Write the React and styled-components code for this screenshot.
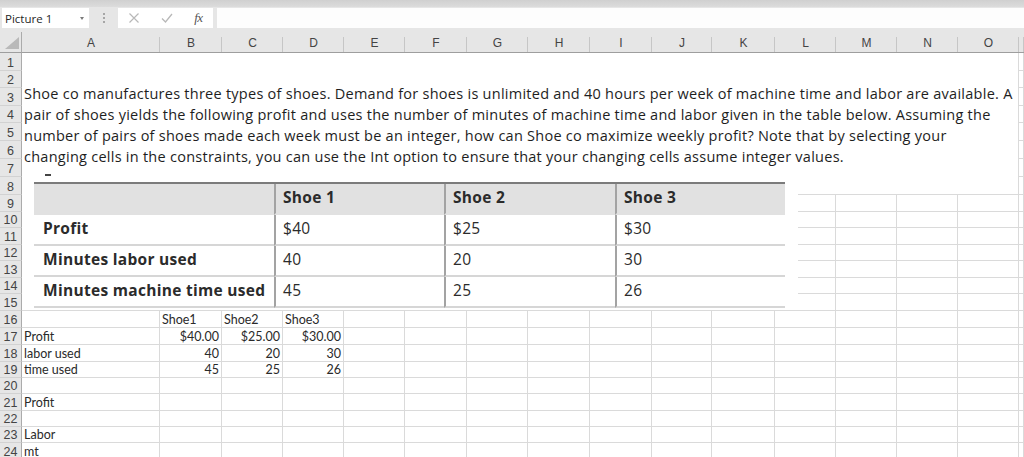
import React from 'react';
import styled, { createGlobalStyle } from 'styled-components';

const GlobalStyle = createGlobalStyle`
  html, body { margin: 0; padding: 0; background: #ffffff; }
  body { width: 1024px; height: 457px; overflow: hidden; }
  #root { width: 1024px; height: 457px; }
`;

const COLS = ['A', 'B', 'C', 'D', 'E', 'F', 'G', 'H', 'I', 'J', 'K', 'L', 'M', 'N', 'O'];
const COL_W = [138, 62, 61, 61, 61, 62, 61, 62, 62, 60, 63, 61, 61, 61, 61];
const ROW_H = [18, 17, 18, 17, 18, 18, 18, 18, 17, 16, 17, 16, 17, 16, 17, 17, 17, 17, 16, 16, 17, 16, 16, 17];

const CELLS = {
  16: [['', 'left'], ['Shoe1', 'left'], ['Shoe2', 'left'], ['Shoe3', 'left']],
  17: [['Profit', 'left'], ['$40.00', 'right'], ['$25.00', 'right'], ['$30.00', 'right']],
  18: [['labor used', 'left'], ['40', 'right'], ['20', 'right'], ['30', 'right']],
  19: [['time used', 'left'], ['45', 'right'], ['25', 'right'], ['26', 'right']],
  21: [['Profit', 'left']],
  23: [['Labor', 'left']],
  24: [['mt', 'left']],
};

const PARAGRAPH = [
  'Shoe co manufactures three types of shoes. Demand for shoes is unlimited and 40 hours per week of machine time and labor are available. A',
  'pair of shoes yields the following profit and uses the number of minutes of machine time and labor given in the table below. Assuming the',
  'number of pairs of shoes made each week must be an integer, how can Shoe co maximize weekly profit? Note that by selecting your',
  'changing cells in the constraints, you can use the Int option to ensure that your changing cells assume integer values.',
];

const TABLE = [
  ['', 'Shoe 1', 'Shoe 2', 'Shoe 3'],
  ['Profit', '$40', '$25', '$30'],
  ['Minutes labor used', '40', '20', '30'],
  ['Minutes machine time used', '45', '25', '26'],
];

const Window = styled.div`
  width: 1024px;
  height: 457px;
  overflow: hidden;
  display: flex;
  flex-direction: column;
  background: #e6e6e6;
  font-family: "Liberation Sans", Arial, sans-serif;
`;

const TopBand = styled.div`
  height: 7px;
  flex: none;
  background: linear-gradient(#d0d0d0, #dcdcdc);
`;

const FormulaBar = styled.div`
  height: 20px;
  flex: none;
  margin-top: 1px;
  display: flex;
  align-items: stretch;
`;

const NameBox = styled.div`
  width: 87px;
  margin-left: 2px;
  background: #fff;
  display: flex;
  align-items: center;
  justify-content: space-between;
  padding: 0 5px 0 3px;
  box-sizing: border-box;
  font-family: "Open Sans", sans-serif;
  font-size: 11.5px;
  color: #262626;
`;

const Caret = styled.span`
  width: 0;
  height: 0;
  border-left: 2.5px solid transparent;
  border-right: 2.5px solid transparent;
  border-top: 3px solid #7a7a7a;
  margin-top: 1px;
`;

const Dots = styled.div`
  width: 29px;
  display: flex;
  flex-direction: column;
  align-items: center;
  justify-content: center;
  gap: 2px;
  span {
    width: 2px;
    height: 2px;
    background: #a6a6a6;
  }
`;

const FuncBox = styled.div`
  width: 95px;
  background: #fff;
  display: flex;
  align-items: center;
  justify-content: space-around;
  color: #b5b5b5;
`;

const Fx = styled.span`
  font-family: "Liberation Serif", serif;
  font-style: italic;
  font-size: 13px;
  color: #555;
  letter-spacing: -0.5px;
`;

const FormulaInput = styled.div`
  flex: 1;
  margin-left: 4px;
  background: #fdfdfd;
`;

const Gap = styled.div`
  height: 4px;
  flex: none;
`;

const SheetArea = styled.div`
  position: relative;
  flex: 1;
  background: #fff;
  overflow: hidden;
`;

const Grid = styled.div`
  display: grid;
  grid-template-columns: ${p => p.$cols};
  grid-template-rows: ${p => p.$rows};
`;

const Corner = styled.div`
  background: #e6e6e6;
  border-right: 1px solid #ababab;
  border-bottom: 1px solid #9e9e9e;
  position: relative;
  &::after {
    content: '';
    position: absolute;
    right: 2px;
    bottom: 3px;
    width: 0;
    height: 0;
    border-left: 14px solid transparent;
    border-bottom: 12px solid #b9b9b9;
  }
`;

const ColHead = styled.div`
  background: #e6e6e6;
  border-bottom: 1px solid #9e9e9e;
  position: relative;
  display: flex;
  align-items: flex-end;
  justify-content: center;
  padding-bottom: 2px;
  font-size: 12px;
  color: #444;
  &::after {
    content: '';
    position: absolute;
    right: 0;
    top: 5px;
    bottom: 0;
    width: 1px;
    background: #c6c6c6;
  }
`;

const RowHead = styled.div`
  background: #e6e6e6;
  border-right: 1px solid #ababab;
  border-bottom: 1px solid #d2d2d2;
  display: flex;
  align-items: flex-end;
  justify-content: center;
  font-size: 12.5px;
  color: #444;
  line-height: 14px;
`;

const Cell = styled.div`
  border-right: 1px solid #dadada;
  border-bottom: 1px solid #dadada;
  display: flex;
  align-items: flex-end;
  justify-content: ${p => (p.$align === 'right' ? 'flex-end' : 'flex-start')};
  padding: 0 2px;
  font-family: "Lato", sans-serif;
  font-size: 12.5px;
  line-height: 14px;
  color: #2a2a2a;
  white-space: nowrap;
  overflow: visible;
`;

const TextBox = styled.div`
  position: absolute;
  left: 22px;
  top: 21px;
  width: 996px;
  height: 141px;
  background: #fff;
  padding: 30px 0 0 2px;
  box-sizing: border-box;
`;

const Line = styled.div`
  font-family: "Open Sans", sans-serif;
  font-size: 14.5px;
  letter-spacing: 0.26px;
  line-height: 21px;
  color: #1e1e1e;
  white-space: nowrap;
`;

const Dash = styled.div`
  width: 6px;
  height: 1.5px;
  background: #444;
  margin: 7px 0 0 21px;
`;

const Picture = styled.div`
  position: absolute;
  left: 22px;
  top: 144px;
  width: 776px;
  height: 134px;
  background: #fff;
  padding: 6px 0 0 12px;
  box-sizing: border-box;
`;

const Table = styled.div`
  width: 751px;
  display: grid;
  grid-template-columns: 240px 170px 171px 170px;
  grid-auto-rows: 31px;
  border-top: 2px solid #7b7b7b;
  font-family: "Open Sans", sans-serif;
  font-size: 15.5px;
  letter-spacing: 0.3px;
  color: #2b2b2b;
`;

const TCell = styled.div`
  background: ${p => (p.$head ? '#e1e1e1' : '#fff')};
  border-left: ${p => (p.$first ? 'none' : '2px solid #a3a3a3')};
  border-bottom: 2px solid ${p => (p.$head ? '#e1e1e1' : '#d6d6d6')};
  font-weight: ${p => (p.$bold ? 700 : 400)};
  padding: 0 0 4px ${p => (p.$first ? 9 : 7)}px;
  display: flex;
  align-items: center;
  white-space: nowrap;
`;

export default function App() {
  const cols = `22px ${COL_W.map(w => `${w}px`).join(' ')} 1fr`;
  const rows = `21px ${ROW_H.map(h => `${h}px`).join(' ')}`;
  return (
    <>
      <GlobalStyle />
      <Window>
        <TopBand />
        <FormulaBar>
          <NameBox>
            <span>Picture 1</span>
            <Caret />
          </NameBox>
          <Dots>
            <span />
            <span />
            <span />
          </Dots>
          <FuncBox>
            <svg width="12" height="12" viewBox="0 0 12 12">
              <path d="M1.5 1.5 L10.5 10.5 M10.5 1.5 L1.5 10.5" stroke="#b8b8b8" strokeWidth="1.2" fill="none" />
            </svg>
            <svg width="12" height="12" viewBox="0 0 12 12">
              <path d="M1 6.5 L4.5 10 L11 2" stroke="#b8b8b8" strokeWidth="1.3" fill="none" />
            </svg>
            <Fx>fx</Fx>
          </FuncBox>
          <FormulaInput />
        </FormulaBar>
        <Gap />
        <SheetArea>
          <Grid $cols={cols} $rows={rows}>
            <Corner />
            {COLS.map(c => (
              <ColHead key={c}>{c}</ColHead>
            ))}
            <ColHead />
            {ROW_H.map((h, i) => {
              const r = i + 1;
              const data = CELLS[r] || [];
              return (
                <React.Fragment key={r}>
                  <RowHead>{r}</RowHead>
                  {COLS.map((c, ci) => {
                    const d = data[ci];
                    return (
                      <Cell key={c} $align={d ? d[1] : 'left'}>
                        {d ? d[0] : ''}
                      </Cell>
                    );
                  })}
                  <Cell />
                </React.Fragment>
              );
            })}
          </Grid>
          <TextBox>
            {PARAGRAPH.map((l, i) => (
              <Line key={i}>{l}</Line>
            ))}
            <Dash />
          </TextBox>
          <Picture>
            <Table>
              {TABLE.map((row, ri) =>
                row.map((v, ci) => (
                  <TCell
                    key={`${ri}-${ci}`}
                    $head={ri === 0}
                    $first={ci === 0}
                    $bold={ri === 0 || ci === 0}
                  >
                    {v}
                  </TCell>
                ))
              )}
            </Table>
          </Picture>
        </SheetArea>
      </Window>
    </>
  );
}
